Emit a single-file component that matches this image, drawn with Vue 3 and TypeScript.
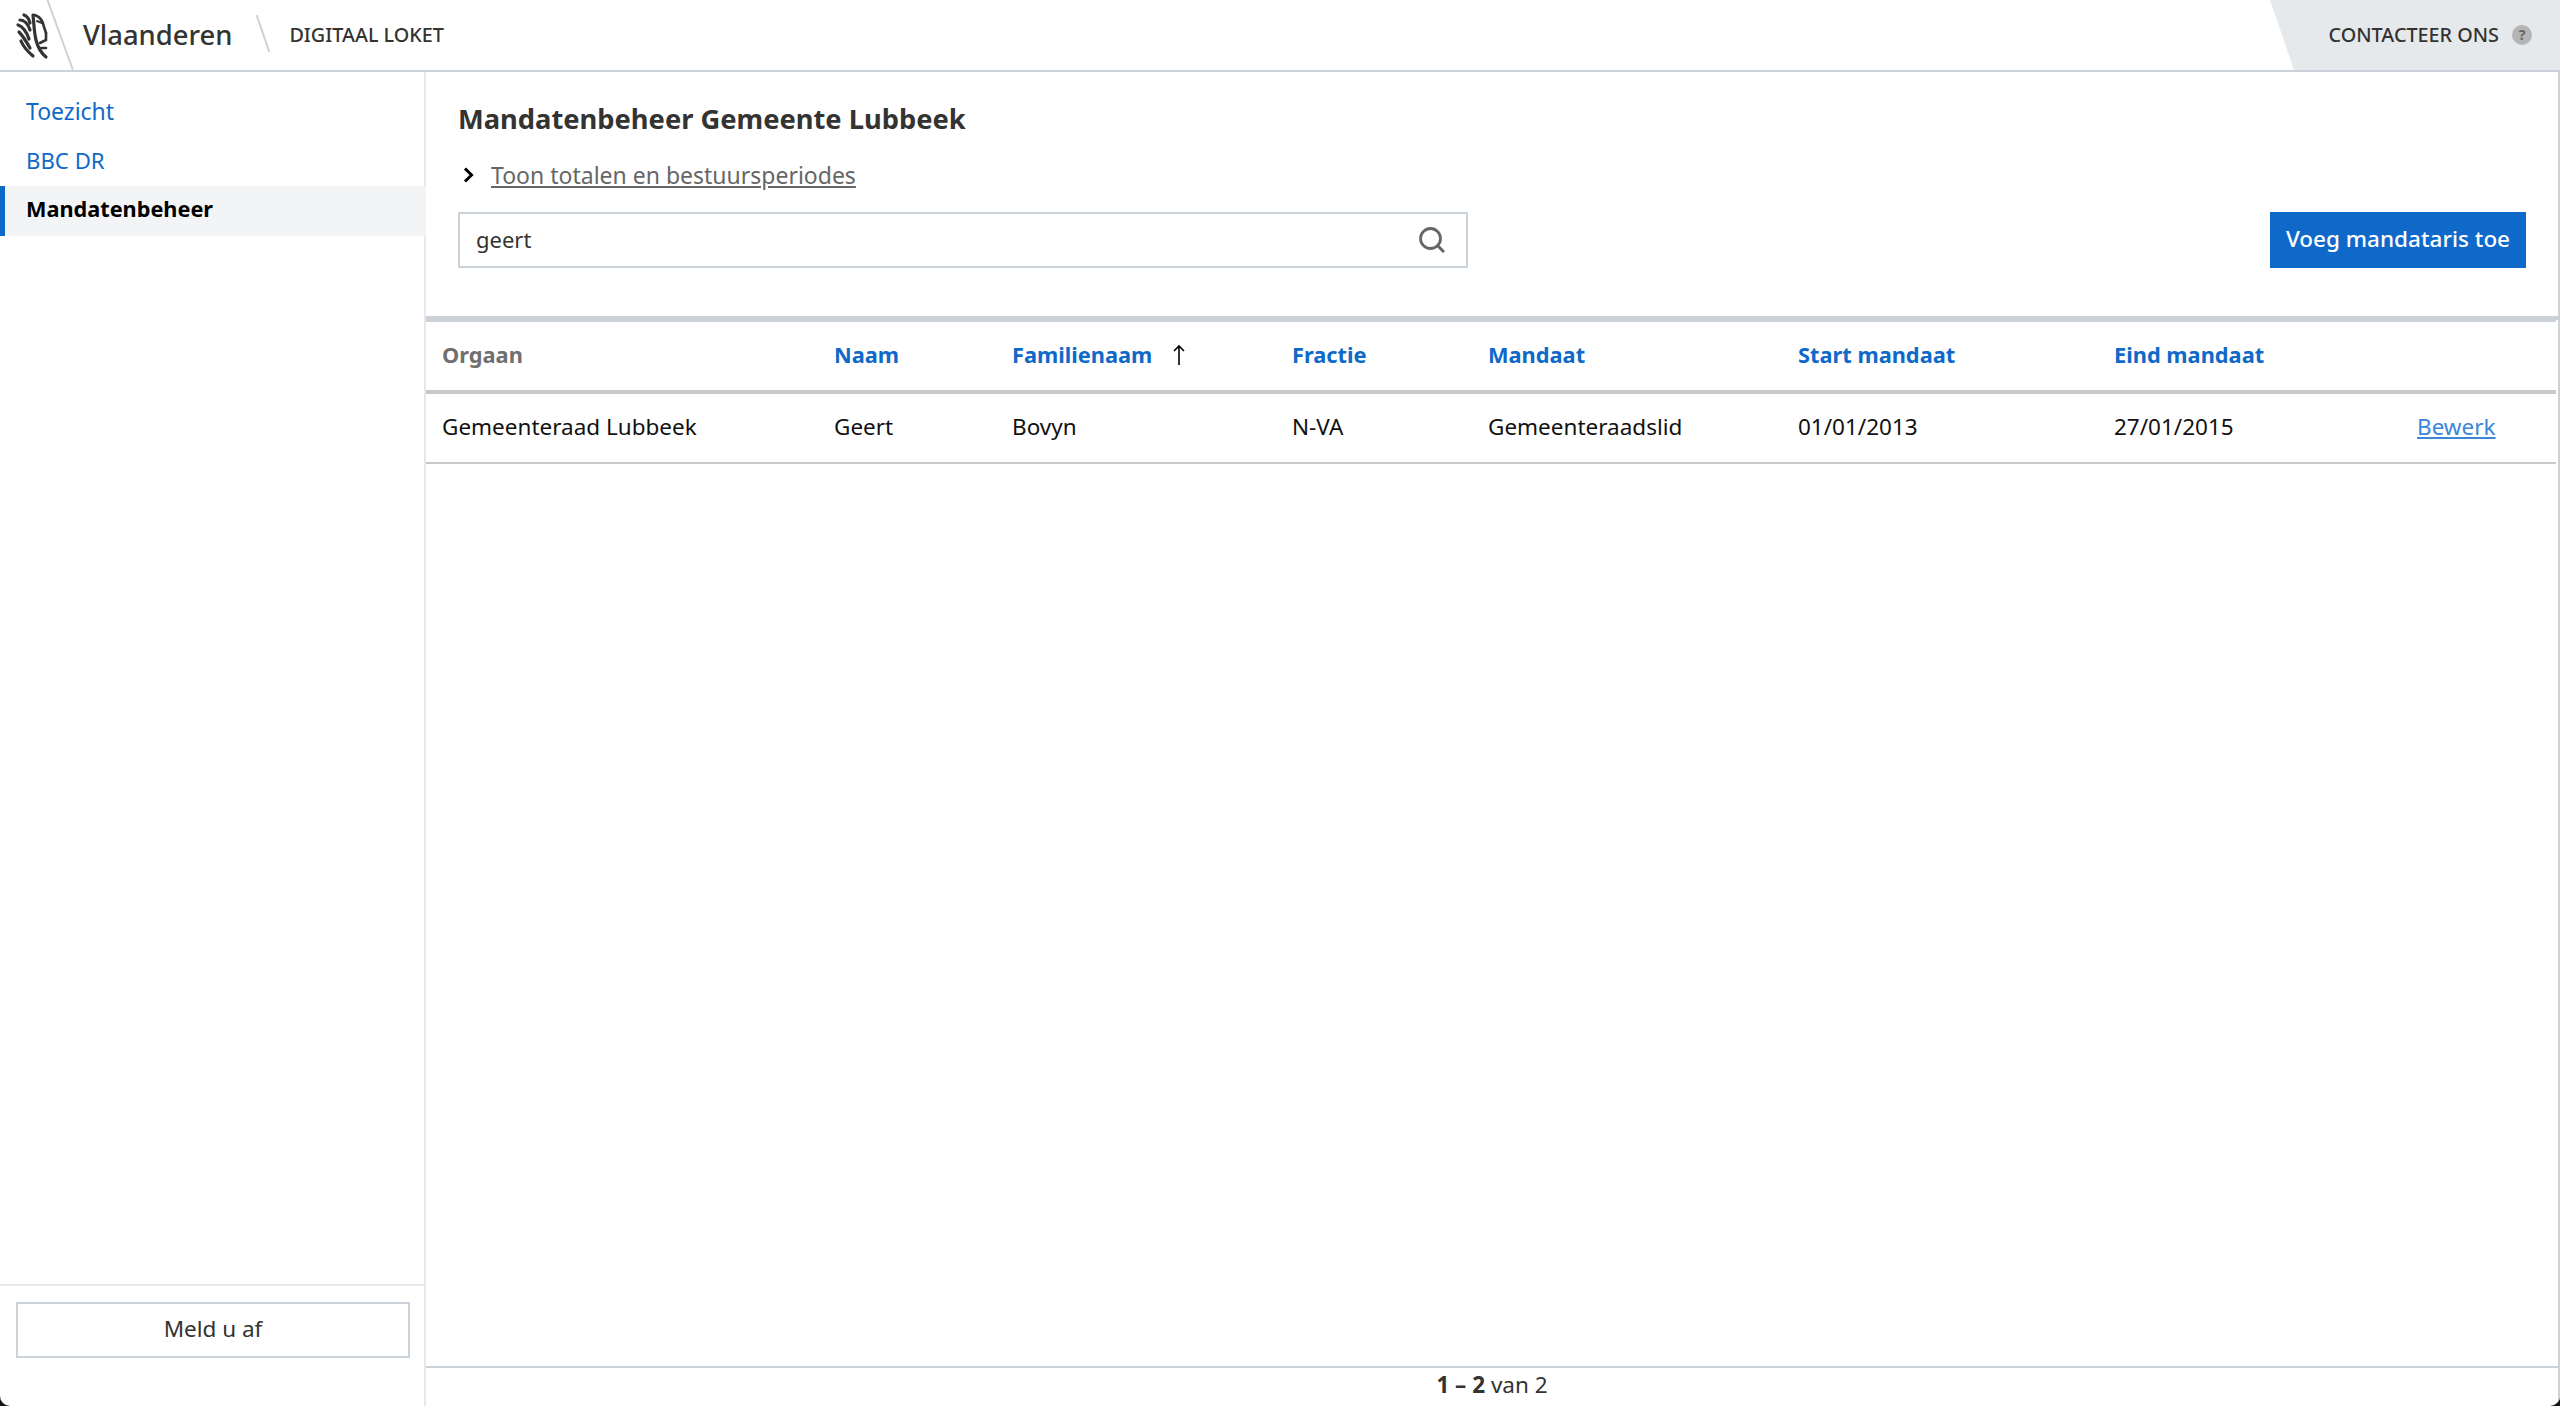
<script setup lang="ts">
const columns = [
  { label: 'Orgaan', width: 392, sortable: false },
  { label: 'Naam', width: 178, sortable: true },
  { label: 'Familienaam', width: 280, sortable: true, sorted: true },
  { label: 'Fractie', width: 196, sortable: true },
  { label: 'Mandaat', width: 310, sortable: true },
  { label: 'Start mandaat', width: 316, sortable: true },
  { label: 'Eind mandaat', width: 302, sortable: true },
  { label: '', width: 0, sortable: false }
]

const row = ['Gemeenteraad Lubbeek', 'Geert', 'Bovyn', 'N-VA', 'Gemeenteraadslid', '01/01/2013', '27/01/2015']

const gridColumns = columns.map((c) => (c.width ? `${c.width}px` : '1fr')).join(' ')
</script>

<template>
  <div class="page">
    <header class="topbar">
      <div class="brand">
        <svg class="lion" viewBox="0 0 36 50" width="36" height="50">
          <g fill="none" stroke="#333332" stroke-width="3.2" stroke-linecap="round">
            <path d="M10 5c3 1 5 4 6 8" />
            <path d="M6 10c4 0 8 4 10 10" />
            <path d="M4 15c4 1 9 7 11 14" />
            <path d="M5 22c3 3 7 9 11 16" />
            <path d="M7 31c2 5 6 10 12 15" />
            <path d="M19 5c1 9 1 17 3 25s5 13 10 17" />
            <path d="M21 5c5 2 8 5 9 12l2 6" stroke-width="2.6" />
            <path d="M23 11l5 2" stroke-width="2" />
            <path d="M32 23v7l-6 3" stroke-width="2.6" />
            <path d="M27 38h5" stroke-width="2.6" />
          </g>
        </svg>
        <span class="brand-slash slash-full"></span>
        <span class="brand-name">Vlaanderen</span>
        <span class="brand-slash slash-small"></span>
        <span class="brand-app">DIGITAAL LOKET</span>
      </div>
      <a class="contact">
        <span class="contact-label">CONTACTEER ONS</span>
        <span class="help">?</span>
      </a>
    </header>

    <div class="body">
      <aside class="sidebar">
        <nav class="side-nav">
          <a class="side-link">Toezicht</a>
          <a class="side-link">BBC DR</a>
          <a class="side-link active">Mandatenbeheer</a>
        </nav>
        <div class="side-footer">
          <button class="logout">Meld u af</button>
        </div>
      </aside>

      <main class="content">
        <section class="intro">
          <h1>Mandatenbeheer Gemeente Lubbeek</h1>
          <div class="toggle">
            <svg viewBox="0 0 11 16" width="11" height="16">
              <path d="M2 1.5l6.5 6.5L2 14.5" fill="none" stroke="#000" stroke-width="3" />
            </svg>
            <a>Toon totalen en bestuursperiodes</a>
          </div>
          <div class="tools">
            <div class="search">
              <span class="search-value">geert</span>
              <svg viewBox="0 0 26 26" width="26" height="26">
                <circle cx="11.5" cy="11.5" r="10" fill="none" stroke="#666" stroke-width="2.8" />
                <path d="M18.5 18.5l6.5 6.5" fill="none" stroke="#666" stroke-width="3" />
              </svg>
            </div>
            <button class="primary">Voeg mandataris toe</button>
          </div>
        </section>

        <section class="table">
          <div class="thead" :style="{ gridTemplateColumns: gridColumns }">
            <div v-for="col in columns" :key="col.label" class="th" :class="{ link: col.sortable }">
              {{ col.label }}
              <svg v-if="col.sorted" class="sort" viewBox="0 0 14 22" width="14" height="22">
                <path d="M7 21V2M2 7l5-5 5 5" fill="none" stroke="#000" stroke-width="1.6" />
              </svg>
            </div>
          </div>
          <div class="trow" :style="{ gridTemplateColumns: gridColumns }">
            <div v-for="cell in row" :key="cell" class="td">{{ cell }}</div>
            <div class="td action"><a>Bewerk</a></div>
          </div>
        </section>

        <footer class="pager"><b>1 – 2</b> van 2</footer>
      </main>
    </div>
  </div>
</template>

<style>
html,
body {
  margin: 0;
  background: #14141c;
}
</style>

<style scoped>
.page {
  width: 2560px;
  height: 1406px;
  display: flex;
  flex-direction: column;
  overflow: hidden;
  background: #fff;
  border-radius: 0 0 10px 10px;
  font-family: "Noto Sans", "Open Sans", sans-serif;
  font-size: 22.5px;
  color: #333332;
}

.topbar {
  height: 72px;
  flex: none;
  display: flex;
  justify-content: space-between;
  box-sizing: border-box;
  border-bottom: 2px solid #cbd2da;
}

.brand {
  display: flex;
  align-items: center;
  position: relative;
  padding-left: 14px;
}

.brand-slash {
  position: absolute;
  width: 2px;
  background: #cbd2da;
}

.slash-full {
  left: 59px;
  top: -3px;
  height: 75px;
  transform: rotate(-20deg);
}

.slash-small {
  left: 262px;
  top: 14px;
  height: 39px;
  transform: rotate(-19deg);
}

.brand-name {
  margin-left: 33px;
  padding-bottom: 2px;
  font-size: 27.4px;
  font-weight: 500;
}

.brand-app {
  margin-left: 57px;
  padding-bottom: 2px;
  font-size: 19.8px;
  font-weight: 500;
}

.contact {
  width: 290px;
  box-sizing: border-box;
  display: flex;
  align-items: center;
  justify-content: flex-end;
  gap: 13px;
  padding-right: 28px;
  background: #e6e9ec;
  clip-path: polygon(0 0, 100% 0, 100% 100%, 24px 100%);
  font-size: 19.8px;
  font-weight: 500;
}

.contact-label {
  padding-bottom: 2px;
}

.help {
  width: 20px;
  height: 20px;
  border-radius: 50%;
  background: #b5b5b5;
  color: #666;
  font-size: 14px;
  font-weight: 700;
  text-align: center;
  line-height: 20px;
}

.body {
  flex: 1;
  display: flex;
  min-height: 0;
}

.sidebar {
  width: 426px;
  flex: none;
  box-sizing: border-box;
  border-right: 2px solid #e6e9ec;
  display: flex;
  flex-direction: column;
}

.side-nav {
  flex: 1;
  display: flex;
  flex-direction: column;
  padding-top: 14px;
}

.side-link {
  height: 50px;
  padding-left: 26px;
  line-height: 50px;
  font-size: 23px;
  color: #0f69c9;
}

.side-link:nth-child(2) {
  font-size: 22.2px;
}

.side-link.active {
  margin-right: -2px;
  box-sizing: border-box;
  padding-left: 21px;
  border-left: 5px solid #0f69c9;
  background: #f3f4f6;
  color: #000;
  font-size: 21.7px;
  line-height: 46px;
  font-weight: 700;
}

.side-footer {
  border-top: 2px solid #e6e9ec;
  padding: 16px 14px 48px 16px;
}

.logout {
  width: 100%;
  height: 56px;
  box-sizing: border-box;
  border: 2px solid #cbd2da;
  padding: 0 0 3px;
  background: #fff;
  font: inherit;
  color: #333332;
}

.content {
  flex: 1;
  min-width: 0;
  display: flex;
  flex-direction: column;
  border-right: 2px solid #cbd2da;
  box-sizing: border-box;
}

.intro {
  box-sizing: border-box;
  height: 248px;
  padding: 28px 32px 0;
  border-bottom: 4px solid #cdd2d8;
}

h1 {
  margin: 0;
  font-size: 27.3px;
  line-height: 38px;
  font-weight: 700;
}

.toggle {
  display: flex;
  align-items: center;
  gap: 17px;
  margin-top: 20px;
  padding-left: 5px;
  height: 34px;
  font-size: 23px;
}

.toggle a {
  color: #666;
  text-decoration: underline;
}

.tools {
  display: flex;
  justify-content: space-between;
  margin-top: 20px;
}

.search {
  width: 1010px;
  height: 56px;
  box-sizing: border-box;
  border: 2px solid #cbd2da;
  padding: 0 21px 0 16px;
  display: flex;
  align-items: center;
  justify-content: space-between;
  font-size: 22px;
}

.search-value {
  padding-bottom: 2px;
}

.primary {
  height: 56px;
  width: 256px;
  border: 0;
  padding: 0 0 3px;
  background: #0f69c9;
  color: #fff;
  font: inherit;
  font-weight: 500;
}

.table {
  flex: 1;
  margin-right: 2px;
}

.thead,
.trow {
  display: grid;
  align-items: center;
  padding-left: 16px;
}

.thead {
  height: 74px;
  border-top: 2px solid #cdd2d8;
  border-bottom: 4px solid #c8c8c8;
  box-sizing: border-box;
}

.trow {
  height: 70px;
  box-sizing: border-box;
  border-bottom: 2px solid #c8c8c8;
}

.th {
  font-weight: 700;
  font-size: 21.8px;
  color: #6f6f6f;
  display: flex;
  align-items: center;
  gap: 20px;
  padding-bottom: 3px;
}

.th.link {
  color: #0f69c9;
}

.td {
  color: #111;
  padding-bottom: 3px;
}

.action a {
  color: #3a86d8;
  text-decoration: underline;
  margin-left: 1px;
}

.pager {
  height: 40px;
  flex: none;
  box-sizing: border-box;
  border-top: 2px solid #cbd2da;
  text-align: center;
  line-height: 34px;
}

.pager b {
  font-weight: 700;
}
</style>
